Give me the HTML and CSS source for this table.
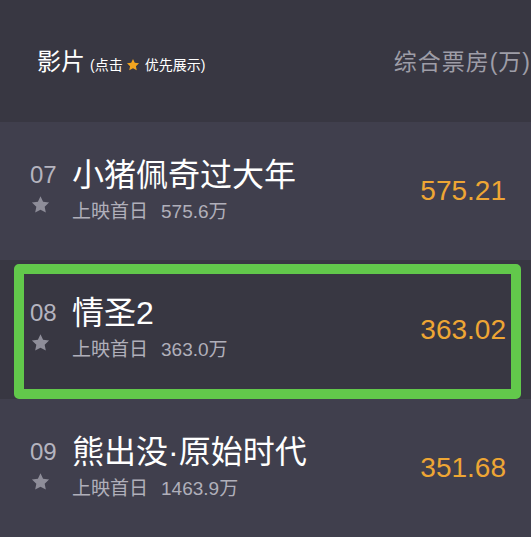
FILE: index.html
```html
<!DOCTYPE html>
<html lang="zh-CN">
<head>
    <meta charset="UTF-8">
    <meta name="viewport" content="width=device-width, initial-scale=1.0">
    <title>票房榜</title>
    <link rel="stylesheet" href="styles.css">
</head>
<body>
    <div class="board">
        <div class="head">
            <div class="head-title">影片<span class="hint">(点击<svg class="hint-star" viewBox="0 0 24 24"><path d="M12 1.5l3.1 6.6 7.2.9-5.3 5 1.4 7.1L12 17.6l-6.4 3.5 1.4-7.1-5.3-5 7.2-.9z"/></svg>优先展示)</span></div>
            <div class="head-box">综合票房(万)</div>
        </div>

        <ul class="films">
            <li class="film">
                <div class="rank">
                    <span class="no">07</span>
                    <svg class="star" viewBox="0 0 24 24"><path d="M12 1.5l3.1 6.6 7.2.9-5.3 5 1.4 7.1L12 17.6l-6.4 3.5 1.4-7.1-5.3-5 7.2-.9z"/></svg>
                </div>
                <div class="info">
                    <div class="name">小猪佩奇过大年</div>
                    <div class="first">上映首日<span>575.6万</span></div>
                </div>
                <div class="box">575.21</div>
            </li>
            <li class="film selected">
                <div class="rank">
                    <span class="no">08</span>
                    <svg class="star" viewBox="0 0 24 24"><path d="M12 1.5l3.1 6.6 7.2.9-5.3 5 1.4 7.1L12 17.6l-6.4 3.5 1.4-7.1-5.3-5 7.2-.9z"/></svg>
                </div>
                <div class="info">
                    <div class="name">情圣2</div>
                    <div class="first">上映首日<span>363.0万</span></div>
                </div>
                <div class="box">363.02</div>
            </li>
            <li class="film">
                <div class="rank">
                    <span class="no">09</span>
                    <svg class="star" viewBox="0 0 24 24"><path d="M12 1.5l3.1 6.6 7.2.9-5.3 5 1.4 7.1L12 17.6l-6.4 3.5 1.4-7.1-5.3-5 7.2-.9z"/></svg>
                </div>
                <div class="info">
                    <div class="name">熊出没·原始时代</div>
                    <div class="first">上映首日<span>1463.9万</span></div>
                </div>
                <div class="box">351.68</div>
            </li>
        </ul>
    </div>
</body>
</html>
```

FILE: styles.css
```css
body {
    margin: 0;
    background-color: #403f4d;
    font-family: "Liberation Sans", "Noto Sans CJK SC", sans-serif;
    overflow: hidden;
}
.board {
    width: 531px;
}
.head {
    display: flex;
    align-items: baseline;
    justify-content: space-between;
    box-sizing: border-box;
    height: 122px;
    padding: 43px 0 0 37px;
    background-color: #383742;
    white-space: nowrap;
}
.head-title {
    color: #fff;
    font-size: 24px;
    line-height: 28px;
}
.hint {
    margin-left: 5px;
    font-size: 14px;
}
.hint-star {
    width: 14px;
    height: 14px;
    margin: 0 5px 0 3px;
    vertical-align: -2px;
    fill: #f3a51f;
}
.head-box {
    color: #9e9da7;
    font-size: 23px;
    letter-spacing: 1px;
}
.films {
    list-style: none;
    margin: 0;
    padding: 0;
}
.film {
    display: flex;
    align-items: center;
    box-sizing: border-box;
    height: 138px;
    padding: 0 25px 0 30px;
}
.film.selected {
    position: relative;
    height: 139px;
    background-color: #383742;
}
.film.selected::after {
    content: "";
    position: absolute;
    top: 4px;
    left: 14px;
    right: 10px;
    bottom: 0;
    border: 10px solid #62c84b;
    border-radius: 5px;
}
.rank {
    display: flex;
    flex-direction: column;
    align-self: flex-start;
    width: 42px;
    padding-top: 35px;
}
.no {
    color: #b5b4bf;
    font-size: 24px;
    line-height: 36px;
}
.star {
    width: 21px;
    height: 20px;
    margin-top: 2px;
    fill: #8e8d99;
}
.info {
    flex: 1;
    align-self: flex-start;
    padding-top: 35px;
}
.name {
    color: #fff;
    font-size: 32px;
    line-height: 36px;
    white-space: nowrap;
}
.first {
    margin-top: 8px;
    color: #b0afba;
    font-size: 19px;
    line-height: 22px;
}
.first span {
    margin-left: 13px;
}
.box {
    color: #eea634;
    font-size: 28px;
}
```
